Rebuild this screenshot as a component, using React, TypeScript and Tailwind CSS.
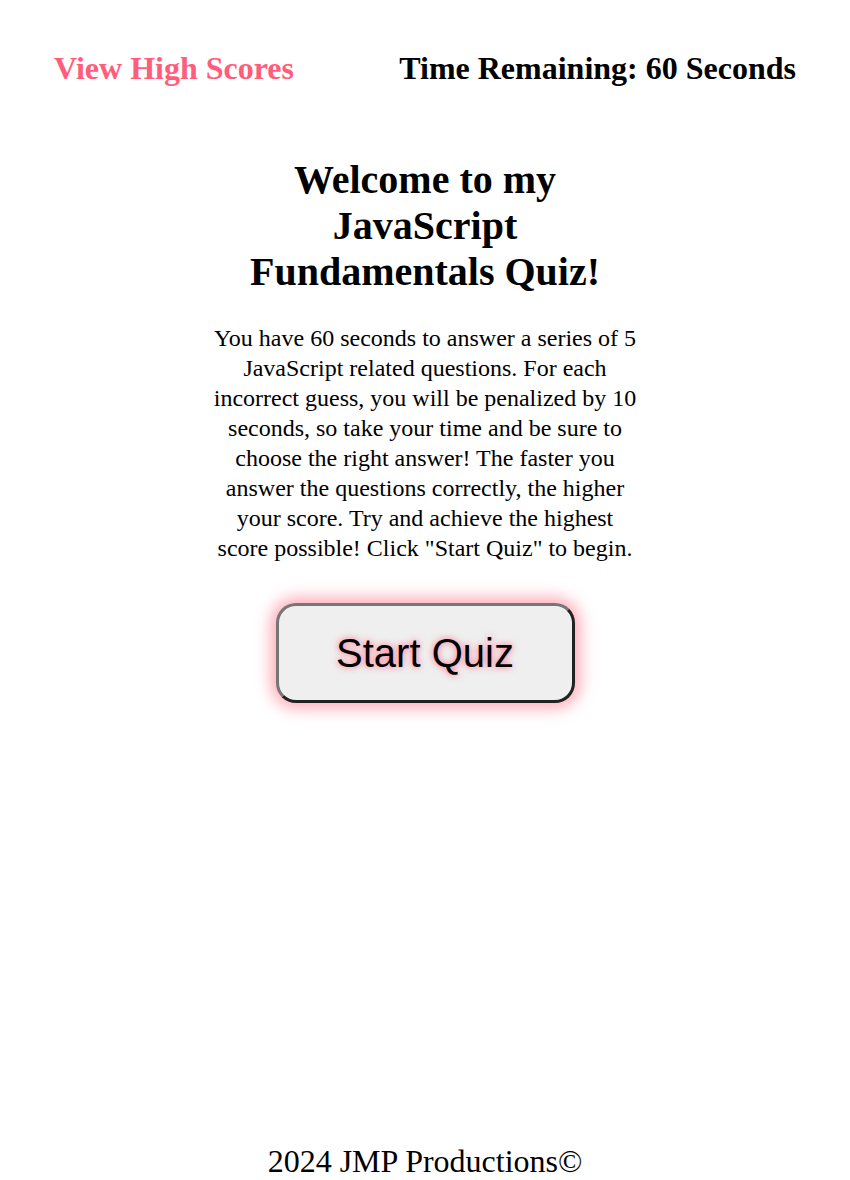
export default function App() {
  return (
    <div className="min-h-[1180px] flex flex-col bg-white text-black font-['Liberation_Serif',serif]">
      <header className="flex justify-between items-center px-[54px] pt-[50px]">
        <a href="#" className="text-[32px] font-bold leading-[37px] text-[#ff5d7b]">
          View High Scores
        </a>
        <p className="text-[32px] font-bold leading-[37px]">Time Remaining: 60 Seconds</p>
      </header>

      <main className="flex flex-col items-center mt-[70px]">
        <div className="w-[428px] text-center">
          <h1 className="text-[40px] font-bold leading-[46px]">
            Welcome to my JavaScript Fundamentals Quiz!
          </h1>
          <p className="mt-[28px] text-[24px] leading-[30px]">
            You have 60 seconds to answer a series of 5 JavaScript related questions. For each
            incorrect guess, you will be penalized by 10 seconds, so take your time and be sure to
            choose the right answer! The faster you answer the questions correctly, the higher
            your score. Try and achieve the highest score possible! Click "Start Quiz" to begin.
          </p>
        </div>
        <button className="mt-[40px] w-[299px] h-[100px] rounded-[20px] border-[3px] border-t-[#767676] border-l-[#767676] border-b-[#222] border-r-[#222] bg-[#efefef] shadow-[0_0_16px_5px_#ffa8b5] font-['Liberation_Sans',sans-serif] text-[40px] [text-shadow:0_0_7px_#ff5d7b]">
          Start Quiz
        </button>
      </main>

      <footer className="mt-auto text-center text-[32px] leading-[37px]">
        2024 JMP Productions©
      </footer>
    </div>
  );
}
